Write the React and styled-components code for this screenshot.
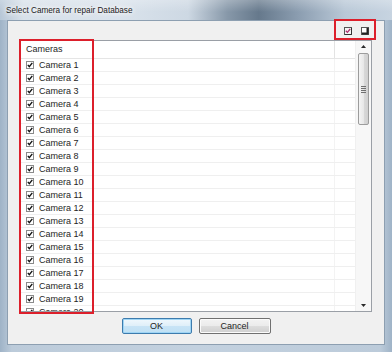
import React from "react";
import styled, { createGlobalStyle } from "styled-components";

const Global = createGlobalStyle`
  html, body { margin: 0; padding: 0; background: #ffffff; }
  body { font-family: "Liberation Sans", Arial, sans-serif; }
  * { box-sizing: border-box; }
`;

const Window = styled.div`
  position: relative;
  width: 392px;
  height: 352px;
  display: flex;
  flex-direction: column;
  background: linear-gradient(90deg, #9fb3c7 0%, #bccbda 3%, #c3d1df 50%, #bccbda 97%, #9fb3c7 100%);
  overflow: hidden;
`;

const TitleBar = styled.div`
  height: 20px;
  flex: none;
  display: flex;
  align-items: center;
  padding-left: 6px;
  background:
    linear-gradient(180deg, rgba(255,255,255,0.25) 0%, rgba(255,255,255,0) 60%),
    linear-gradient(90deg, #b7c7d7 0%, #d8e1ea 6%, #dae3ec 30%, #cdd8e3 48%, #8798a9 58%, #66798c 66%, #8b9db0 76%, #b9c8d7 88%, #c7d4e1 100%);
`;

const TitleText = styled.span`
  font-size: 8.2px;
  color: #1b1b1b;
  text-shadow: 0 0 4px #ffffff, 0 0 6px #ffffff, 0 0 8px rgba(255,255,255,0.9);
  white-space: nowrap;
`;

const Client = styled.div`
  flex: 1;
  margin: 0 7px 7px 7px;
  border: 1px solid #8d9fb1;
  background: #f0f0f0;
  display: flex;
  flex-direction: column;
  padding: 6px 12px 10px 12px;
  min-height: 0;
`;

const Toolbar = styled.div`
  height: 8px;
  flex: none;
  display: flex;
  justify-content: flex-end;
  align-items: center;
  gap: 9px;
  padding-right: 3px;
  margin-bottom: 5px;
`;

const ToolIcon = styled.svg`
  width: 8px;
  height: 8px;
  display: block;
`;

const ListBox = styled.div`
  flex: 1;
  min-height: 0;
  border: 1px solid #9a9fa6;
  background: #ffffff;
  display: flex;
  overflow: hidden;
`;

const ListContent = styled.div`
  flex: 1;
  display: flex;
  flex-direction: column;
  overflow: hidden;
`;

const HeaderRow = styled.div`
  height: 18px;
  flex: none;
  display: grid;
  grid-template-columns: 72px 242px 1fr;
  border-bottom: 1px solid #e5e5e5;
`;

const HeaderCell = styled.div`
  font-size: 9px;
  color: #1e1e1e;
  display: flex;
  align-items: center;
  padding-left: 5px;
  padding-bottom: 2px;
  border-right: ${(p) => (p.$last ? "none" : "1px solid #e3e3e3")};
`;

const Row = styled.div`
  height: 13px;
  flex: none;
  display: grid;
  grid-template-columns: 72px 242px 1fr;
  border-bottom: 1px solid #efefef;
`;

const Cell = styled.div`
  display: flex;
  align-items: center;
  gap: 5px;
  padding-left: 5px;
  font-size: 9px;
  color: #1e1e1e;
  white-space: nowrap;
  border-right: ${(p) => (p.$last ? "none" : "1px solid #f3f3f3")};
`;

const Check = styled.svg`
  width: 8px;
  height: 8px;
  flex: none;
  display: block;
`;

const ScrollBar = styled.div`
  width: 16px;
  flex: none;
  background: #f7f7f7;
  border-left: 1px solid #f0f0f0;
  display: flex;
  flex-direction: column;
  align-items: center;
`;

const Arrow = styled.div`
  height: 11px;
  flex: none;
  display: flex;
  align-items: center;
  justify-content: center;
`;

const Thumb = styled.div`
  width: 11px;
  height: 72px;
  margin-top: 1px;
  border: 1px solid #9c9c9c;
  border-radius: 2px;
  background: linear-gradient(90deg, #f4f4f4 0%, #e8e8e8 50%, #d9d9d9 51%, #d0d0d0 100%);
  display: flex;
  flex-direction: column;
  align-items: center;
  justify-content: center;
  gap: 1px;
`;

const Grip = styled.div`
  width: 5px;
  height: 1px;
  background: #6f6f6f;
`;

const Track = styled.div`
  flex: 1;
`;

const ButtonRow = styled.div`
  flex: none;
  display: flex;
  justify-content: center;
  gap: 7px;
  margin-top: 6px;
  height: 16px;
`;

const Button = styled.button`
  width: ${(p) => (p.$w || 71)}px;
  height: 16px;
  padding: 0;
  font-family: "Liberation Sans", Arial, sans-serif;
  font-size: 9px;
  color: #1e1e1e;
  border-radius: 2px;
  border: 1px solid ${(p) => (p.$default ? "#3d7bad" : "#707070")};
  box-shadow: ${(p) => (p.$default ? "inset 0 0 0 1px #9fd5f5" : "inset 0 0 0 1px #fbfbfb")};
  background: ${(p) =>
    p.$default
      ? "linear-gradient(180deg, #f0f8fd 0%, #dfeff9 50%, #c8e4f6 51%, #bfe0f4 100%)"
      : "linear-gradient(180deg, #f3f3f3 0%, #ebebeb 50%, #dddddd 51%, #cfcfcf 100%)"};
`;

const Annotation = styled.div`
  position: absolute;
  border: 2px solid #dc1f2b;
  pointer-events: none;
`;

const CheckedIcon = () => (
  <Check viewBox="0 0 8 8">
    <rect x="0.5" y="0.5" width="7" height="7" fill="#ffffff" stroke="#8a8a8a" />
    <path d="M1.8 3.9 L3.3 5.6 L6.3 1.9" fill="none" stroke="#111" strokeWidth="1.4" />
  </Check>
);

const cameras = Array.from({ length: 20 }, (_, i) => `Camera ${i + 1}`);

export default function App() {
  return (
    <Window>
      <Global />
      <TitleBar>
        <TitleText>Select Camera for repair Database</TitleText>
      </TitleBar>
      <Client>
        <Toolbar>
          <ToolIcon viewBox="0 0 8 8">
            <rect x="0.5" y="0.5" width="7" height="7" fill="#f4f4f4" stroke="#555" />
            <path d="M7.5 1 V7.5 H1" fill="none" stroke="#333" strokeWidth="1" />
            <path d="M1.8 3.8 L3.4 5.4 L6.2 2" fill="none" stroke="#b03070" strokeWidth="1.3" />
          </ToolIcon>
          <ToolIcon viewBox="0 0 8 8">
            <rect x="0.5" y="0.5" width="7" height="7" fill="#ffffff" stroke="#555" />
            <path d="M6.5 1 V6.5 H1" fill="none" stroke="#222" strokeWidth="2" />
          </ToolIcon>
        </Toolbar>
        <ListBox>
          <ListContent>
            <HeaderRow>
              <HeaderCell>Cameras</HeaderCell>
              <HeaderCell />
              <HeaderCell $last />
            </HeaderRow>
            {cameras.map((c) => (
              <Row key={c}>
                <Cell>
                  <CheckedIcon />
                  {c}
                </Cell>
                <Cell />
                <Cell $last />
              </Row>
            ))}
          </ListContent>
          <ScrollBar>
            <Arrow>
              <svg width="5" height="3" viewBox="0 0 5 3">
                <path d="M0 3 L2.5 0 L5 3 Z" fill="#2a2a2a" />
              </svg>
            </Arrow>
            <Thumb>
              <Grip />
              <Grip />
              <Grip />
              <Grip />
            </Thumb>
            <Track />
            <Arrow>
              <svg width="5" height="3" viewBox="0 0 5 3">
                <path d="M0 0 L2.5 3 L5 0 Z" fill="#2a2a2a" />
              </svg>
            </Arrow>
          </ScrollBar>
        </ListBox>
        <ButtonRow>
          <Button $default $w={70}>OK</Button>
          <Button $w={72}>Cancel</Button>
        </ButtonRow>
      </Client>
      <Annotation style={{ left: 334, top: 19, width: 42, height: 21 }} />
      <Annotation style={{ left: 19, top: 39, width: 75, height: 275 }} />
    </Window>
  );
}
